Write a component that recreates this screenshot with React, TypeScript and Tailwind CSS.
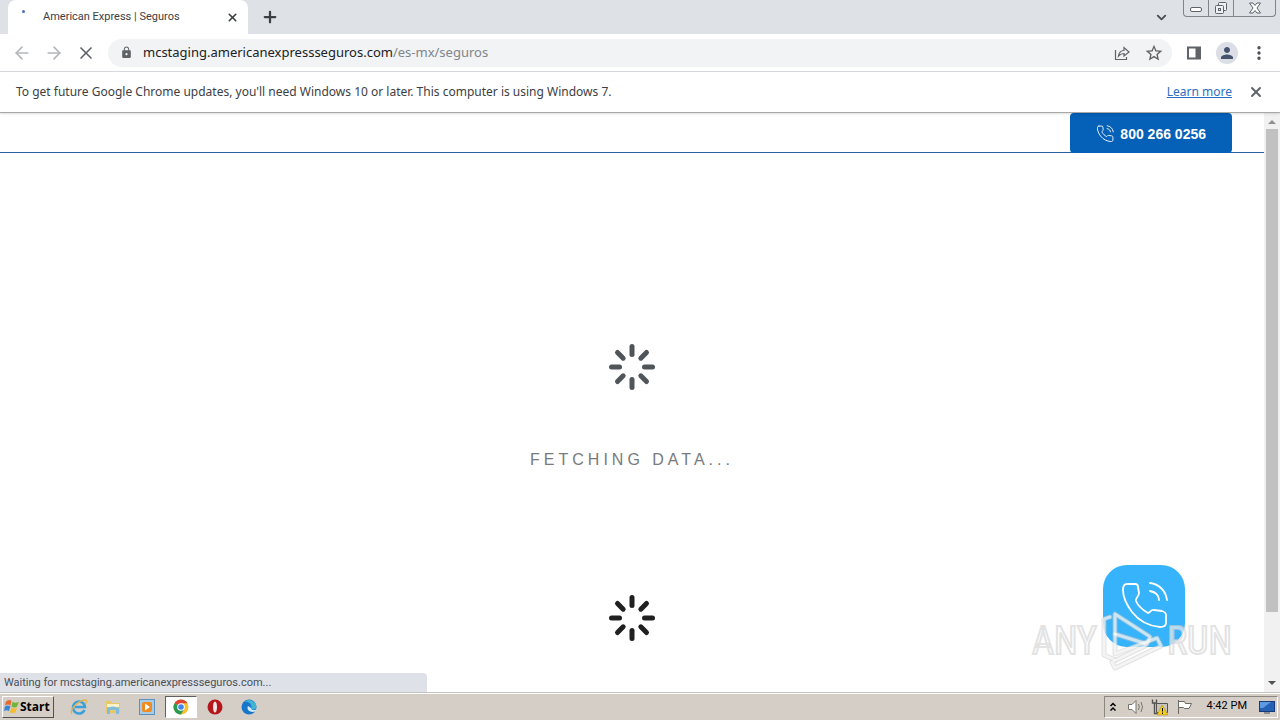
import type { ReactNode } from "react";
import { ArrowLeft, ArrowRight, ChevronDown, EllipsisVertical, Plus, X } from "lucide-react";
import { MdLock, MdOutlineStarBorder, MdPerson } from "react-icons/md";

const SPOKES = [0, 45, 90, 135, 180, 225, 270, 315];

const HANDSET =
  "M24 19 H32 C34 19 35 20 35 22 L36 28 C36 32 32 33 33 36 C35 41 40 45 45 48 C47 48 48 44 51 45 L59 46 C62 47 63 48 63 50 V58 C63 61 60 62 57 62 C46 61 36 56 29 47 C23 39 20 32 20 25 C20 21 21 19 24 19 Z";

function PhoneIcon({ className, stroke }: { className: string; stroke: number }) {
  return (
    <svg viewBox="16 16 50 50" className={className} fill="none" stroke="currentColor" strokeWidth={stroke} strokeLinecap="round" strokeLinejoin="round">
      <path d={HANDSET} />
      <path d="M47 18 C56 19 63 26 64 35" />
      <path d="M47 26 C52 27 56 30 56 35" />
    </svg>
  );
}

function Spinner({ className }: { className: string }) {
  return (
    <svg viewBox="-24 -24 48 48" className={className} stroke="currentColor" strokeWidth="5" strokeLinecap="round">
      {SPOKES.map((angle) => (
        <path key={angle} d="M0 -12.5 V-20.5" transform={`rotate(${angle})`} />
      ))}
    </svg>
  );
}

function TabStrip() {
  return (
    <div className="flex h-[34px] items-start bg-[#dee1e6] pl-2 pr-1">
      <div className="flex h-[34px] w-60 items-center rounded-t-lg bg-white pr-2">
        <span className="ml-3.5 mb-2.5 size-[3px] self-start mt-2.5 rounded-full bg-[#4a70b8]" />
        <span className="ml-[18px] flex-1 font-[Roboto,'Noto_Sans',sans-serif] text-[11px] text-[#3c4043]">American Express | Seguros</span>
        <button aria-label="Close tab" className="flex size-4 items-center justify-center text-[#3c4043]">
          <X size={13} strokeWidth={3} />
        </button>
      </div>
      <button aria-label="New tab" className="ml-3 flex h-[34px] w-5 items-center justify-center text-[#3c4043]">
        <Plus size={18} strokeWidth={3} />
      </button>
      <button aria-label="Search tabs" className="ml-auto mr-3 flex h-[34px] w-5 items-center justify-center text-[#4a4e54]">
        <ChevronDown size={15} strokeWidth={3} />
      </button>
      <div className="flex h-[17px] overflow-hidden rounded-b border border-t-0 border-[#80848b] text-[#5f6368]">
        <button aria-label="Minimize" className="flex w-[25px] items-center justify-center border-r border-[#80848b]">
          <svg viewBox="0 0 12 12" className="size-3" fill="white" stroke="currentColor">
            <rect x="0.5" y="5.5" width="11" height="4" rx="1.5" />
          </svg>
        </button>
        <button aria-label="Restore" className="flex w-[25px] items-center justify-center border-r border-[#80848b]">
          <svg viewBox="0 0 14 14" className="size-3.5" fill="#eef0f3" stroke="currentColor">
            <rect x="4.5" y="1.5" width="8" height="8" rx="1" />
            <rect x="1.5" y="4.5" width="8" height="8" rx="1" />
            <rect x="4.5" y="7.5" width="2" height="2" />
          </svg>
        </button>
        <button aria-label="Close" className="flex w-[41px] items-center justify-center">
          <svg viewBox="0 0 12 12" className="size-3" fill="white" stroke="currentColor">
            <path d="M0.5 1 H4 L6 3.5 L8 1 H11.5 L8 6 L11.5 11 H8 L6 8.5 L4 11 H0.5 L4 6 Z" />
          </svg>
        </button>
      </div>
    </div>
  );
}

function Toolbar() {
  return (
    <div className="flex h-[38px] items-center border-b border-[#dadce0] bg-white px-3 text-[#5f6368]">
      <button aria-label="Back" className="flex w-5 justify-center text-[#b4b6b9]">
        <ArrowLeft size={20} />
      </button>
      <button aria-label="Forward" className="ml-3 flex w-5 justify-center text-[#b4b6b9]">
        <ArrowRight size={20} />
      </button>
      <button aria-label="Stop" className="ml-3 flex w-5 justify-center">
        <X size={20} />
      </button>
      <div className="ml-3 flex h-7 flex-1 items-center rounded-full bg-[#f1f3f4] pl-3 pr-2">
        <MdLock size={13} />
        <a href="#" className="ml-2.5 flex-1 text-[13px] text-[#80868b]">
          <span className="text-[#202124]">mcstaging.americanexpressseguros.com</span>/es-mx/seguros
        </a>
        <button aria-label="Share" className="mr-3.5">
          <svg viewBox="0 0 16 16" className="size-4" fill="none" stroke="currentColor" strokeWidth="1.2">
            <path d="M1.5 5 V14.5 H12.5 V12" />
            <path d="M4.5 11 C5 7.5 7 5.5 10 5.5 V2.5 L15 7 L10 11 V8.5 C7.5 8.500 6 9.2 4.5 11 Z" />
          </svg>
        </button>
        <button aria-label="Bookmark">
          <MdOutlineStarBorder size={20} />
        </button>
      </div>
      <button aria-label="Side panel" className="ml-3.5">
        <svg viewBox="0 0 16 16" className="size-4">
          <path d="M1 1.5 H15 V14.5 H1 Z M3 3.5 V12.5 H9.5 V3.5 Z" fill="currentColor" fillRule="evenodd" />
        </svg>
      </button>
      <button aria-label="Profile" className="ml-3.5 flex size-[22px] items-center justify-center rounded-full bg-[#dbdee4] text-[#46536e]">
        <MdPerson size={18} />
      </button>
      <button aria-label="Menu" className="ml-3 text-[#4a4e54]">
        <EllipsisVertical size={18} strokeWidth={2.5} />
      </button>
    </div>
  );
}

function InfoBar() {
  return (
    <div className="relative z-10 flex h-[41px] items-center border-b border-[#a8a8a8] bg-white px-4 text-[12px] text-[#3c4043] shadow-sm">
      <p className="flex-1">To get future Google Chrome updates, you'll need Windows 10 or later. This computer is using Windows 7.</p>
      <a href="#" className="text-[#2a6fc4] underline">
        Learn more
      </a>
      <button aria-label="Dismiss" className="ml-4 text-[#5f6368]">
        <X size={16} strokeWidth={3} />
      </button>
    </div>
  );
}

function ScrollBar() {
  return (
    <div className="flex w-4 flex-col items-center bg-[#f1f1f1]">
      <svg viewBox="0 0 16 16" className="size-4 fill-[#909090]">
        <path d="M4 11 L8 7 L12 11 Z" />
      </svg>
      <div className="w-3 grow-[482] bg-[#c1c1c1]" />
      <div className="grow-[64]" />
      <svg viewBox="0 0 16 16" className="size-4 fill-[#505050]">
        <path d="M4 5 L8 9 L12 5 Z" />
      </svg>
    </div>
  );
}

function Watermark() {
  return (
    <div className="pointer-events-none absolute right-12 bottom-[18px] flex items-center font-['Liberation_Sans_Narrow','Roboto_Condensed','Liberation_Sans',sans-serif] text-[38px] leading-none text-white/60 [-webkit-text-stroke:2px_#d0d0d099]">
      <span>ANY</span>
      <svg viewBox="0 0 70 66" className="h-[66px] w-[70px]" fill="none" strokeLinejoin="round" strokeLinecap="round">
        <g stroke="#c8c8c8" strokeOpacity="0.5" strokeWidth="5">
          <path d="M18 52 L7 47 V11 L13 9" />
          <path d="M52 28 L18 6 V26 L50 36 L53 29" />
          <path d="M18 26 V46 L60 30 L64 38 L18 60 L15 54 L48 38" />
        </g>
        <g stroke="white" strokeOpacity="0.6" strokeWidth="3">
          <path d="M18 52 L7 47 V11 L13 9" />
          <path d="M52 28 L18 6 V26 L50 36 L53 29" />
          <path d="M18 26 V46 L60 30 L64 38 L18 60 L15 54 L48 38" />
        </g>
      </svg>
      <span>RUN</span>
    </div>
  );
}

function Page() {
  return (
    <div className="relative flex min-h-0 flex-1 bg-white">
      <main className="relative flex flex-1 flex-col font-['Liberation_Sans',Arial,sans-serif]">
        <header className="flex h-10 justify-end border-b border-[#2a5fa0] pr-8">
          <a href="#" className="flex h-10 items-center gap-1.5 rounded-sm bg-[#0560b8] px-[26px] pt-px text-sm font-bold text-white">
            <PhoneIcon className="size-[18px]" stroke={2.5} />
            800 266 0256
          </a>
        </header>
        <div className="flex flex-col items-center pt-[190px]">
          <Spinner className="size-12 text-[#50555a]" />
          <p className="mt-[57px] text-base tracking-[4px] text-[#777a7e]">FETCHING DATA...</p>
          <Spinner className="mt-[122px] size-12 text-[#202020]" />
        </div>
        <button aria-label="Call" className="absolute right-[79px] bottom-[45px] flex size-[82px] items-center justify-center rounded-3xl bg-[#36b3fb] text-white">
          <PhoneIcon className="size-[50px]" stroke={1.8} />
        </button>
      </main>
      <ScrollBar />
      <Watermark />
      <div className="absolute bottom-0 left-0 h-[19px] w-1/3 rounded-tr bg-[#dee1e8] pl-1 font-[Roboto,'Noto_Sans',sans-serif] text-[11px] leading-[19px] text-[#4b4f55]">
        Waiting for mcstaging.americanexpressseguros.com...
      </div>
    </div>
  );
}

function TaskButton({ label, active, children }: { label: string; active?: boolean; children: ReactNode }) {
  return (
    <button
      aria-label={label}
      className={
        active
          ? "flex h-[22px] w-8 items-center justify-center border border-t-[#606060] border-r-white border-b-white border-l-[#606060] bg-white"
          : "flex h-[22px] w-8 items-center justify-center"
      }
    >
      <svg viewBox="0 0 18 18" className="size-[18px]">
        {children}
      </svg>
    </button>
  );
}

function TaskBar() {
  return (
    <footer className="flex h-7 items-center border-t border-[#c4c4bc] bg-[#d5cec7] px-0.5 shadow-[inset_0_1px_0_white]">
      <button className="flex h-[22px] w-[52px] items-center border border-t-white border-r-[#505050] border-b-[#505050] border-l-white text-[12px] font-bold text-black">
        <svg viewBox="0 0 18 18" className="size-[17px] shrink-0">
          <path d="M3 4 Q6 1 9 3 L8 8 Q5 6 2 8 Z" fill="#e66a32" />
          <path d="M10 4 Q13 6 17 4 L15 9 Q12 11 9 9 Z" fill="#72b43c" />
          <path d="M2 9 Q5 7 8 9 L6 14 Q4 12 1 14 Z" fill="#3c86d2" />
          <path d="M9 10 Q12 12 15 10 L13 15 Q10 17 7 15 Z" fill="#f3bd32" />
        </svg>
        <span className="font-['Open_Sans','Noto_Sans',sans-serif]">Start</span>
      </button>
      <div className="ml-[9px] flex items-center gap-0.5">
        <TaskButton label="Internet Explorer">
          <path d="M14.5 12 A6 6 0 1 1 15 9 H5" fill="none" stroke="#3aa0dc" strokeWidth="2.6" />
          <path d="M2 16 C-1 12 8 2 16 2 C18 3 16 5 15 6" fill="none" stroke="#e2b54b" strokeWidth="1.3" />
        </TaskButton>
        <TaskButton label="Explorer">
          <path d="M2 3 H7 L8 5 H16 V15 H2 Z" fill="#e8c766" />
          <path d="M3 6 H15 V9 H3 Z" fill="#faf2c8" />
          <path d="M3 16 V10 Q9 7 15 10 V16 H12 V12 H6 V16 Z" fill="#7fbddd" />
        </TaskButton>
        <TaskButton label="Media Player">
          <rect x="1.5" y="1.5" width="15" height="15" fill="#a9cce6" stroke="#5b92bd" />
          <rect x="4" y="4" width="10" height="10" rx="2" fill="#ef8b22" />
          <path d="M7 5.500 L12 9 L7 12.5 Z" fill="white" />
        </TaskButton>
        <TaskButton label="Chrome" active>
          <circle cx="9" cy="9" r="7.5" fill="#f6c22f" />
          <path d="M9 9 L2.5 5.25 A7.5 7.5 0 0 1 15.5 5.25 H9 Z" fill="#dc4437" />
          <path d="M9 9 L2.5 5.25 A7.5 7.5 0 0 0 9 16.5 L12 11 Z" fill="#2c9b52" />
          <circle cx="9" cy="9" r="3.8" fill="white" />
          <circle cx="9" cy="9" r="2.8" fill="#4185ee" />
        </TaskButton>
        <TaskButton label="Opera">
          <circle cx="9" cy="9" r="7.5" fill="#b3161b" />
          <ellipse cx="9" cy="9" rx="2" ry="5.5" fill="#f6e4e2" />
        </TaskButton>
        <TaskButton label="Edge">
          <circle cx="9" cy="9" r="7.5" fill="#1876c8" />
          <path d="M4 4 A7.5 7.5 0 0 1 16.5 9 C16 12 12 12 11 11 C13 6 8 3 4 4 Z" fill="#3fb4d4" />
          <path d="M8 8 C6 12 10 15 15 13.5 L17 11 C14 13 11 12 11 10 Z" fill="#d5ebf5" />
        </TaskButton>
      </div>
      <div className="ml-auto flex h-[22px] items-center border border-t-[#8a8680] border-r-white border-b-white border-l-[#8a8680] pr-0.5 pl-1 text-[11px] text-black">
        <svg viewBox="0 0 8 12" className="h-3 w-2" fill="none" stroke="black" strokeWidth="1.5">
          <path d="M1.5 5 L4 2.5 L6.5 5 M1.5 9.500 L4 7 L6.5 9.5" />
        </svg>
        <svg viewBox="0 0 18 18" className="ml-2.5 size-[18px]" fill="white" stroke="#77736d">
          <path d="M1.5 6.5 H5 L9 2.5 V15.5 L5 11.5 H1.5 Z" />
          <path d="M11.5 6 Q13 9 11.5 12 M14 4 Q17 9 14 14" fill="none" />
        </svg>
        <svg viewBox="0 0 18 18" className="ml-1.5 size-[18px]">
          <path d="M5.5 5.5 H16.5 V14.5 H5.5 Z" fill="#c8c5be" stroke="#55534f" />
          <path d="M1.5 1.5 V5 H5.5 V1.5 M3.5 5 V15.5 H7" fill="none" stroke="#55534f" strokeWidth="1.4" />
          <path d="M11 7 L17 17 H6 Z" fill="#f5cd22" stroke="#b98d10" strokeWidth="0.6" />
          <path d="M11.5 10 V13.5 M11.5 14.5 V16" stroke="black" />
        </svg>
        <svg viewBox="0 0 18 18" className="ml-1.5 size-[18px]" fill="white" stroke="#6d6a64">
          <path d="M3.5 2 V16 M3.5 3.5 H9.5 L10.5 5.5 H16.5 L14 10.5 H9.5 L8.5 9.5 H3.5 Z" />
        </svg>
        <span className="ml-3.5 font-[Roboto,'Noto_Sans',sans-serif]">4:42 PM</span>
        <svg viewBox="0 0 16 14" className="ml-3 h-3.5 w-4">
          <rect x="0.5" y="1.5" width="15" height="10" fill="#2561b5" stroke="#163b78" />
          <path d="M1 2 H12 L4 8 H1 Z" fill="#5e9ae0" />
          <path d="M5 13 H11" stroke="#45515f" />
        </svg>
      </div>
    </footer>
  );
}

export default function App() {
  return (
    <div className="flex h-screen flex-col overflow-hidden font-['Noto_Sans','Open_Sans',sans-serif]">
      <TabStrip />
      <Toolbar />
      <InfoBar />
      <Page />
      <TaskBar />
    </div>
  );
}
